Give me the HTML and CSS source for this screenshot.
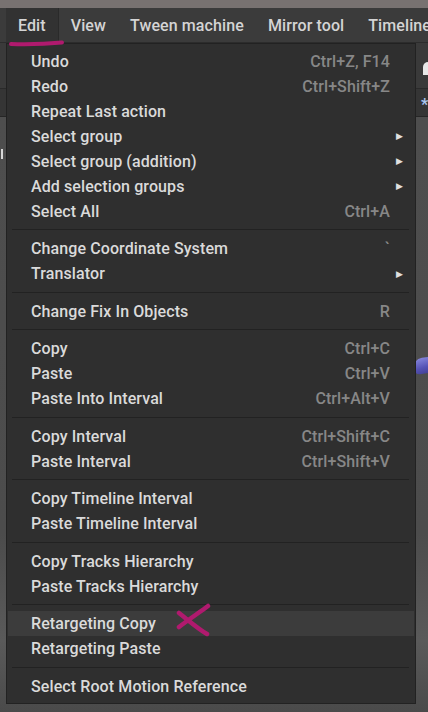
FILE: index.html
```html
<!DOCTYPE html>
<html lang="en">
<head>
  <meta charset="UTF-8">
  <meta name="viewport" content="width=device-width, initial-scale=1.0">
  <title>Edit menu</title>
  <link rel="stylesheet" href="styles.css">
</head>
<body>
  <div class="title-strip"></div>

  <!-- Barra de menus -->
  <nav class="menubar">
    <span class="menubar-item active">Edit</span>
    <span class="menubar-item">View</span>
    <span class="menubar-item">Tween machine</span>
    <span class="menubar-item">Mirror tool</span>
    <span class="menubar-item">Timeline</span>
  </nav>

  <!-- Área de trabalho por trás do menu -->
  <div class="workspace">
    <div class="dock-top">
      <span class="dock-icon"></span>
    </div>
    <div class="toolbar">
      <span class="toolbar-star">*</span>
    </div>
    <div class="viewport">
      <span class="mark"></span>
      <span class="object"></span>
    </div>
  </div>

  <!-- Menu Edit aberto -->
  <div class="dropdown">
    <div class="item"><span class="label">Undo</span><span class="shortcut">Ctrl+Z, F14</span><span class="arrow"></span></div>
    <div class="item"><span class="label">Redo</span><span class="shortcut">Ctrl+Shift+Z</span><span class="arrow"></span></div>
    <div class="item"><span class="label">Repeat Last action</span><span class="shortcut"></span><span class="arrow"></span></div>
    <div class="item"><span class="label">Select group</span><span class="shortcut"></span><span class="arrow">&#9654;</span></div>
    <div class="item"><span class="label">Select group (addition)</span><span class="shortcut"></span><span class="arrow">&#9654;</span></div>
    <div class="item"><span class="label">Add selection groups</span><span class="shortcut"></span><span class="arrow">&#9654;</span></div>
    <div class="item"><span class="label">Select All</span><span class="shortcut">Ctrl+A</span><span class="arrow"></span></div>
    <div class="separator"></div>
    <div class="item"><span class="label">Change Coordinate System</span><span class="shortcut">`</span><span class="arrow"></span></div>
    <div class="item"><span class="label">Translator</span><span class="shortcut"></span><span class="arrow">&#9654;</span></div>
    <div class="separator"></div>
    <div class="item"><span class="label">Change Fix In Objects</span><span class="shortcut">R</span><span class="arrow"></span></div>
    <div class="separator"></div>
    <div class="item"><span class="label">Copy</span><span class="shortcut">Ctrl+C</span><span class="arrow"></span></div>
    <div class="item"><span class="label">Paste</span><span class="shortcut">Ctrl+V</span><span class="arrow"></span></div>
    <div class="item"><span class="label">Paste Into Interval</span><span class="shortcut">Ctrl+Alt+V</span><span class="arrow"></span></div>
    <div class="separator"></div>
    <div class="item"><span class="label">Copy Interval</span><span class="shortcut">Ctrl+Shift+C</span><span class="arrow"></span></div>
    <div class="item"><span class="label">Paste Interval</span><span class="shortcut">Ctrl+Shift+V</span><span class="arrow"></span></div>
    <div class="separator"></div>
    <div class="item"><span class="label">Copy Timeline Interval</span><span class="shortcut"></span><span class="arrow"></span></div>
    <div class="item"><span class="label">Paste Timeline Interval</span><span class="shortcut"></span><span class="arrow"></span></div>
    <div class="separator"></div>
    <div class="item"><span class="label">Copy Tracks Hierarchy</span><span class="shortcut"></span><span class="arrow"></span></div>
    <div class="item"><span class="label">Paste Tracks Hierarchy</span><span class="shortcut"></span><span class="arrow"></span></div>
    <div class="separator"></div>
    <div class="item hover"><span class="label">Retargeting Copy</span><span class="shortcut"></span><span class="arrow"></span></div>
    <div class="item"><span class="label">Retargeting Paste</span><span class="shortcut"></span><span class="arrow"></span></div>
    <div class="separator"></div>
    <div class="item"><span class="label">Select Root Motion Reference</span><span class="shortcut"></span><span class="arrow"></span></div>
  </div>

  <!-- Anotações à mão (magenta) -->
  <svg class="ink-underline" width="58" height="10" viewBox="0 0 58 10">
    <path d="M3 6 C 20 6.5, 38 6, 54 4.5" stroke="#b01a6e" stroke-width="4" fill="none" stroke-linecap="round"/>
  </svg>
  <svg class="ink-cross" width="36" height="34" viewBox="0 0 36 34">
    <path d="M32 3 C 24 9, 12 17, 3 24" stroke="#b01a6e" stroke-width="4.5" fill="none" stroke-linecap="round"/>
    <path d="M3 10 C 12 17, 21 25, 31 31" stroke="#b01a6e" stroke-width="4.5" fill="none" stroke-linecap="round"/>
  </svg>
</body>
</html>
```

FILE: styles.css
```css
/* Reset */
* {
  margin: 0;
  padding: 0;
  box-sizing: border-box;
}

body {
  width: 428px;
  height: 712px;
  overflow: hidden;
  position: relative;
  font-family: Roboto, "Liberation Sans", sans-serif;
  font-size: 16px;
  font-weight: 500;
  letter-spacing: 0.1px;
  background-color: #4b4b4b;
  display: flex;
  flex-direction: column;
}

/* Faixa cinza no topo */
.title-strip {
  height: 8px;
  background-color: #787271;
}

/* Barra de menus */
.menubar {
  height: 35px;
  background-color: #3b3b3b;
  border-bottom: 1px solid #2c2c2c;
  display: flex;
  align-items: stretch;
  padding-left: 6px;
  white-space: nowrap;
  overflow: hidden;
  color: #d4d4d4;
}

.menubar-item {
  display: flex;
  align-items: center;
  padding: 0 12px;
}

.menubar-item.active {
  background-color: #323232;
  border-right: 1px solid #2a2a2a;
}

/* Área de trabalho */
.workspace {
  flex: 1;
  display: flex;
  flex-direction: column;
}

.dock-top {
  height: 46px;
  background-color: #3a3a3a;
  border-bottom: 1px solid #2a2a2a;
  position: relative;
}

.dock-icon {
  position: absolute;
  left: 423px;
  top: 19px;
  width: 10px;
  height: 13px;
  background-color: #e8e8e8;
  border-radius: 6px 6px 0 0;
}

.toolbar {
  height: 28px;
  background-color: #353535;
  border-bottom: 1px solid #262626;
  position: relative;
}

.toolbar-star {
  position: absolute;
  left: 421px;
  top: 6px;
  color: #a9c4ee;
  font-size: 16px;
  font-weight: bold;
}

.viewport {
  flex: 1;
  position: relative;
  background: linear-gradient(180deg, #4e4e4e 0%, #4c4c4c 70%, #5a5a5a 88%, #4a4a4a 100%);
}

.mark {
  position: absolute;
  left: 1px;
  top: 32px;
  width: 2px;
  height: 10px;
  background-color: #d8d8d8;
}

.object {
  position: absolute;
  left: 413px;
  top: 240px;
  width: 30px;
  height: 16px;
  background: linear-gradient(170deg, #8a8ae0 0%, #5552b5 55%, #3b3a8a 100%);
  border-radius: 10px 0 0 6px;
  transform: rotate(-8deg);
}

/* Menu suspenso */
.dropdown {
  position: absolute;
  left: 6px;
  top: 43px;
  width: 410px;
  height: 661px;
  background-color: #2f2f2f;
  border: 1px solid #222222;
  padding: 4.5px 0;
  color: #dadada;
  white-space: nowrap;
}

.item {
  height: 25px;
  display: flex;
  align-items: center;
  padding-left: 23px;
  margin: 0 1px;
}

.item.hover {
  background-color: #3c3c3c;
}

.label {
  flex: 1;
}

.shortcut {
  color: #878787;
}

.arrow {
  width: 24px;
  padding-left: 6px;
  font-size: 9px;
  color: #e0e0e0;
}

.separator {
  height: 1px;
  background-color: #222222;
  margin: 5.5px 6px 6px 5px;
}

/* Anotações */
.ink-underline {
  position: absolute;
  left: 8px;
  top: 38px;
}

.ink-cross {
  position: absolute;
  left: 176px;
  top: 603px;
}
```
